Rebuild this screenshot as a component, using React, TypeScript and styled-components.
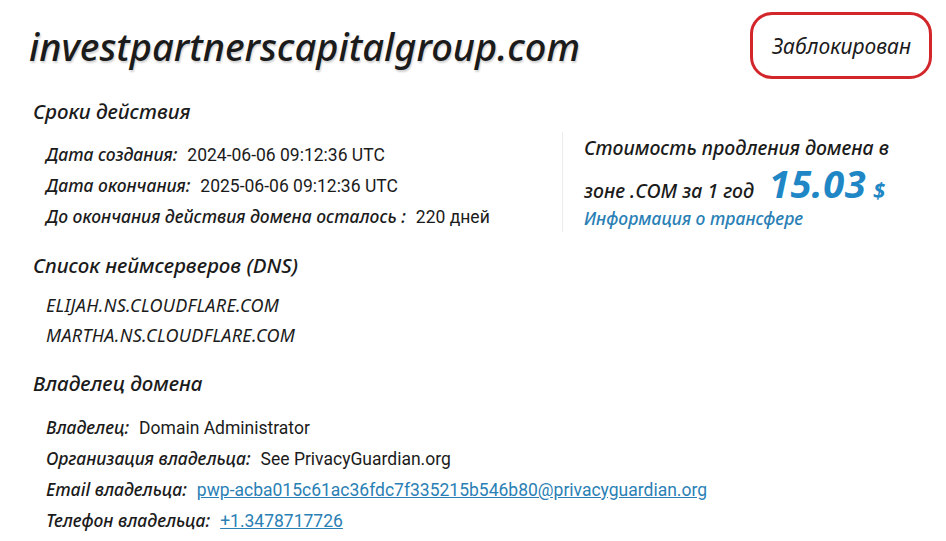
import React from 'react';
import styled, { createGlobalStyle } from 'styled-components';

const GlobalStyle = createGlobalStyle`
  body {
    margin: 0;
    background: #fff;
    color: #1b1b1b;
    font-family: 'Noto Sans', Arial, sans-serif;
  }
`;

const Page = styled.div`
  width: 946px;
  box-sizing: border-box;
  padding: 12px 14px 0 30px;
`;

const Header = styled.header`
  display: flex;
  align-items: center;
  justify-content: space-between;
`;

const DomainTitle = styled.h1`
  margin: 0 0 0 -1px;
  font-size: 38px;
  line-height: 48px;
  font-style: italic;
  font-weight: 500;
  color: #1b1b1b;
  text-shadow: 1px 2px 2px rgba(0, 0, 0, 0.18);
`;

const StatusBadge = styled.div`
  height: 67px;
  box-sizing: border-box;
  padding: 0 18px 0 19px;
  display: flex;
  align-items: center;
  border: 3px solid #d3262b;
  border-radius: 22px;
  font-size: 21px;
  font-style: italic;
  font-weight: 400;
`;

const Section = styled.section<{ $gap: number }>`
  margin-top: ${p => p.$gap}px;
`;

const SectionTitle = styled.h2`
  margin: 0 0 0 3px;
  height: 30px;
  font-size: 20.5px;
  line-height: 30px;
  font-style: italic;
  font-weight: 500;
`;

const SplitRow = styled.div`
  display: flex;
  align-items: flex-start;
`;

const InfoList = styled.div<{ $top: number; $line: number }>`
  flex: 1;
  margin-top: ${p => p.$top}px;
  padding-left: 16px;
  display: flex;
  flex-direction: column;
  line-height: ${p => p.$line}px;
  font-size: 17.5px;

  & > * {
    height: ${p => p.$line}px;
  }
`;

const InfoRow = styled.div`
  white-space: nowrap;
`;

const Label = styled.span`
  font-style: italic;
  font-weight: 500;
  margin-right: 10px;
`;

const Value = styled.span`
  font-family: Roboto, 'Noto Sans', sans-serif;
`;

const ValueLink = styled.a`
  font-family: Roboto, 'Noto Sans', sans-serif;
  color: #2a7fb5;
  text-decoration: underline;
`;

const NameServer = styled.div`
  font-size: 18px;
  font-style: italic;
  font-weight: 400;
  letter-spacing: 0.3px;
  text-transform: uppercase;
`;

const PricePanel = styled.aside`
  width: 370px;
  margin-top: 6px;
  height: 100px;
  box-sizing: border-box;
  padding: 0 0 0 21px;
  border-left: 1px solid #ececec;
`;

const PriceText = styled.div`
  font-size: 19.5px;
  line-height: 32px;
  font-style: italic;
  font-weight: 500;
  white-space: nowrap;
`;

const PriceAmount = styled.span`
  margin-left: 15px;
  font-size: 38px;
  line-height: 1;
  font-weight: 700;
  color: #1f87c5;
  letter-spacing: 0.5px;
`;

const Currency = styled.span`
  margin-left: 7px;
  font-size: 22px;
  line-height: 1;
  font-weight: 700;
  color: #1f87c5;
`;

const TransferLink = styled.a`
  display: block;
  margin-top: -1px;
  font-size: 17.5px;
  font-style: italic;
  font-weight: 500;
  color: #2a7fb5;
  text-decoration: none;
`;

const datesRows = [
  { label: 'Дата создания:', value: '2024-06-06 09:12:36 UTC' },
  { label: 'Дата окончания:', value: '2025-06-06 09:12:36 UTC' },
  { label: 'До окончания действия домена осталось :', value: '220 дней' },
];

const nameServers = ['ELIJAH.NS.CLOUDFLARE.COM', 'MARTHA.NS.CLOUDFLARE.COM'];

export default function App() {
  return (
    <Page>
      <GlobalStyle />
      <Header>
        <DomainTitle>investpartnerscapitalgroup.com</DomainTitle>
        <StatusBadge>Заблокирован</StatusBadge>
      </Header>

      <Section $gap={17}>
        <SectionTitle>Сроки действия</SectionTitle>
        <SplitRow>
          <InfoList $top={13} $line={31}>
            {datesRows.map(r => (
              <InfoRow key={r.label}>
                <Label>{r.label}</Label>
                <Value>{r.value}</Value>
              </InfoRow>
            ))}
          </InfoList>
          <PricePanel>
            <PriceText>
              Стоимость продления домена в
              <br />
              зоне .COM за 1 год
              <PriceAmount>15.03</PriceAmount>
              <Currency>$</Currency>
            </PriceText>
            <TransferLink href="#">Информация о трансфере</TransferLink>
          </PricePanel>
        </SplitRow>
      </Section>

      <Section $gap={18}>
        <SectionTitle>Список неймсерверов (DNS)</SectionTitle>
        <InfoList $top={10} $line={30}>
          {nameServers.map(ns => (
            <NameServer key={ns}>{ns}</NameServer>
          ))}
        </InfoList>
      </Section>

      <Section $gap={18}>
        <SectionTitle>Владелец домена</SectionTitle>
        <InfoList $top={14} $line={31}>
          <InfoRow>
            <Label>Владелец:</Label>
            <Value>Domain Administrator</Value>
          </InfoRow>
          <InfoRow>
            <Label>Организация владельца:</Label>
            <Value>See PrivacyGuardian.org</Value>
          </InfoRow>
          <InfoRow>
            <Label>Email владельца:</Label>
            <ValueLink href="#">pwp-acba015c61ac36fdc7f335215b546b80@privacyguardian.org</ValueLink>
          </InfoRow>
          <InfoRow>
            <Label>Телефон владельца:</Label>
            <ValueLink href="#">+1.3478717726</ValueLink>
          </InfoRow>
        </InfoList>
      </Section>
    </Page>
  );
}
